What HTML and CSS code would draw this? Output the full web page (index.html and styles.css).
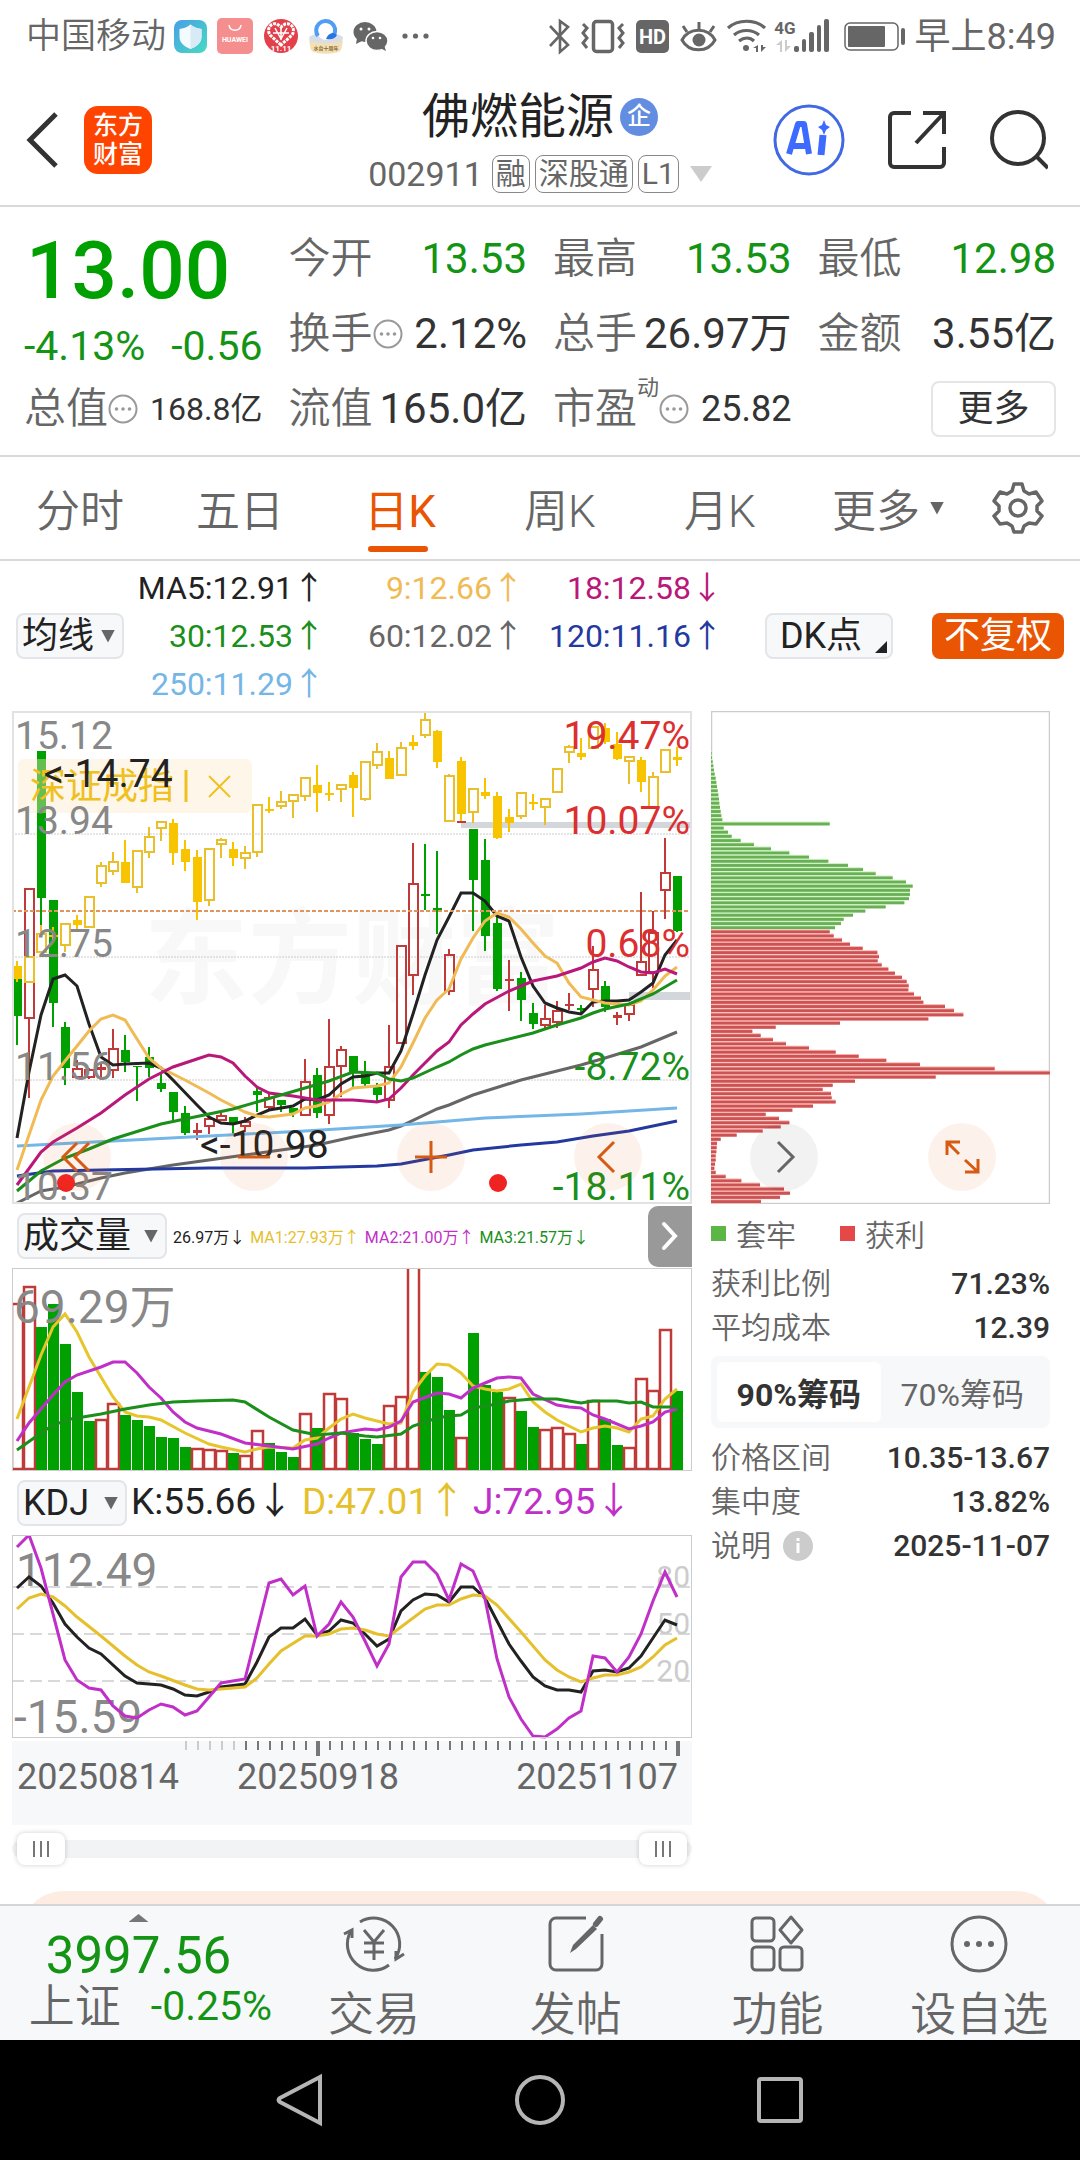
FILE: index.html
```html
<!doctype html>
<html lang="zh-CN">
<head>
<meta charset="utf-8">
<meta name="viewport" content="width=device-width, initial-scale=1">
<title>佛燃能源 002911</title>
<link rel="stylesheet" href="styles.css">
</head>
<body>
<div class="app">

    <!-- 状态栏 -->
    <div class="statusbar">
        <div class="status-side">
            <span class="carrier">中国移动</span>
            <svg class="status-left" viewBox="174 18 256 38">
                <defs>
                    <linearGradient id="shieldBg" x1="0" y1="0" x2="1" y2="1"><stop offset="0" stop-color="#4a9ee8"/><stop offset="1" stop-color="#45dcc0"/></linearGradient>
                </defs>
                <rect x="174" y="20" width="33" height="33" rx="8" fill="url(#shieldBg)"/>
                <path d="M190.500 24.500c4 3 7 4 11 4.500v8c0 6-5 9.500-11 12-6-2.500-11-6-11-12v-8c4-.5 7-1.500 11-4.500z" fill="#f3fbff"/>
                <path d="M190.500 24.500c4 3 7 4 11 4.500v8c0 6-5 9.500-11 12z" fill="#d8eaf5"/>
                <rect x="217" y="18" width="36" height="36" rx="5" fill="#f58e8e"/>
                <path d="M229 25c1 7 11 7 12 0" fill="none" stroke="#fff" stroke-width="1.500"/>
                <text x="235" y="42" class="icon-text" font-size="7" text-anchor="middle">HUAWEI</text>
                <circle cx="281" cy="36" r="17" fill="#e2404a"/>
                <path d="M281 45l-11-10c-4-6 1-13 7-11l4 3 4-3c6-2 11 5 7 11z" fill="none" stroke="#fff" stroke-width="3" stroke-dasharray="3 1"/>
                <path d="M275 28l6 11 6-11M273 33h16M281 28v12" fill="none" stroke="#fff" stroke-width="1.500"/>
                <text x="281" y="51" class="icon-text" font-size="8" text-anchor="middle">11.11</text>
                <path d="M309 37c8-6 25-6 34 0l-2 12c-2 4-28 4-30 0z" fill="#d9dee6"/>
                <circle cx="326" cy="31" r="9" fill="#fff"/>
                <path d="M318 36a9.500 9.500 0 1 1 16-1" fill="none" stroke="#4f9df5" stroke-width="4"/>
                <path d="M326 39c2-6 8-8 11-4-2 4-6 5-11 4z" fill="#2a76e0"/>
                <path d="M309 41c10 3 24 3 34 0l-2 9c-4 5-26 5-30 0z" fill="#f3e0b4"/>
                <text x="326" y="50" class="icon-text brown" font-size="5" text-anchor="middle">水台十周年</text>
                <ellipse cx="365" cy="32" rx="11.500" ry="10" fill="#666"/>
                <path d="M357 38l-1 6 6-3z" fill="#666"/>
                <ellipse cx="377" cy="41" rx="11" ry="9.500" fill="#666" stroke="#fff" stroke-width="1.500"/>
                <path d="M380 48l6 3-2-6z" fill="#666"/>
                <g fill="#fff"><circle cx="361" cy="29" r="1.500"/><circle cx="369" cy="29" r="1.500"/><circle cx="373" cy="38" r="1.300"/><circle cx="380" cy="38" r="1.300"/></g>
                <g fill="#666"><circle cx="405" cy="36" r="2.600"/><circle cx="415.500" cy="36" r="2.600"/><circle cx="426" cy="36" r="2.600"/></g>
            </svg>
        </div>
        <div class="status-side">
            <svg class="status-right" viewBox="548 18 358 38">
                <g fill="none" stroke="#666" stroke-width="2.600">
                    <path d="M549 26l18 19-8 7V21l8 6-18 19"/>
                    <rect x="592.500" y="21.500" width="19" height="30" rx="3" stroke-width="3.500"/>
                    <path d="M582 24l4 4-4 5 4 5-4 5 4 5M622 24l-4 4 4 5-4 5 4 5-4 5" stroke-width="3"/>
                    <path d="M681 40c7-13 26-13 33 0-7 13-26 13-33 0z" stroke-width="3"/>
                    <path d="M698 22v7M682 26l4 6M713 26l-4 6" stroke-width="3"/>
                    <path d="M727 28c10-9 27-9 37 0M733 35c7-6 18-6 25 0M738 41c5-4 11-4 15 0" stroke-width="3.200"/>
                </g>
                <rect x="635" y="20" width="33" height="33" rx="5" fill="#666"/>
                <text x="651.500" y="44" class="icon-text" font-size="20" text-anchor="middle">HD</text>
                <g fill="#666">
                    <circle cx="698" cy="40" r="6.500"/>
                    <circle cx="745" cy="48" r="3"/>
                    <path d="M757 45v7h-2v-4h-3zM760 45v7l5-5h-3v-2z"/>
                    <rect x="793" y="46" width="5" height="6" rx="2"/><rect x="801" y="39" width="4" height="13" rx="2"/><rect x="808" y="32" width="5" height="20" rx="2"/><rect x="816" y="25" width="4" height="27" rx="2"/><rect x="823" y="19" width="5" height="33" rx="2"/>
                </g>
                <path d="M781 40v12h-2v-7h-4zM784 40v12l6-6h-4v-6z" fill="#ccc"/>
                <text x="784" y="34" class="icon-text gray" font-size="17" text-anchor="middle">4G</text>
                <rect x="844" y="23" width="53" height="27" rx="5" fill="none" stroke="#666" stroke-width="1.500"/>
                <rect x="847" y="26" width="37" height="21" rx="1" fill="#666"/>
                <rect x="900" y="28" width="4" height="17" rx="2" fill="#666"/>
            </svg>
            <span>早上8:49</span>
        </div>
    </div>

    <!-- 标题栏 -->
    <header class="header">
        <div class="header-side">
            <button class="icon-btn" aria-label="返回"><svg width="34" height="58" viewBox="0 0 34 58"><path d="M30 3L4 29l26 26" fill="none" stroke="#333" stroke-width="5"/></svg></button>
            <a class="logo" href="#"><span>东方</span><span>财富</span></a>
        </div>
        <div class="stock">
            <h1>佛燃能源<span class="corp">企</span></h1>
            <div class="stock-sub">
                <span class="code">002911</span>
                <span class="tag">融</span><span class="tag">深股通</span><span class="tag">L1</span>
                <svg width="22" height="16" viewBox="0 0 22 16"><path d="M0 0h22L11 16z" fill="#ccc"/></svg>
            </div>
        </div>
        <div class="header-side actions">
            <button class="icon-btn" aria-label="AI">
                <svg width="74" height="74" viewBox="0 0 74 74">
                    <circle cx="37" cy="37" r="34" fill="none" stroke="#4169e1" stroke-width="3"/>
                    <path d="M17 51l9-30h6l5 30M20 43h15" fill="none" stroke="#3d6bff" stroke-width="6" stroke-linejoin="round"/>
                    <path d="M51 32l-2 20" stroke="#3d6bff" stroke-width="7"/>
                    <path d="M52 17l2 5 4 2-4 3-2 5-2-5-4-3 4-2z" fill="#3d6bff"/>
                </svg>
            </button>
            <button class="icon-btn" aria-label="分享">
                <svg width="60" height="60" viewBox="0 0 60 60" fill="none" stroke="#333" stroke-width="4"><path d="M24 3H7a4 4 0 0 0-4 4v46a4 4 0 0 0 4 4h46a4 4 0 0 0 4-4V37M36 3h21v21M57 3L29 33"/></svg>
            </button>
            <button class="icon-btn" aria-label="搜索">
                <svg width="60" height="60" viewBox="0 0 60 60" fill="none" stroke="#333" stroke-width="4"><circle cx="30" cy="28" r="26"/><path d="M48 46l12 12"/></svg>
            </button>
        </div>
    </header>

    <!-- 行情数据 -->
    <section class="quote">
        <div class="price">13.00</div>
        <div class="cell"><span>今开</span><b class="down">13.53</b></div>
        <div class="cell"><span>最高</span><b class="down">13.53</b></div>
        <div class="cell"><span>最低</span><b class="down">12.98</b></div>
        <div class="cell change"><b class="down">-4.13%</b><b class="down">-0.56</b></div>
        <div class="cell"><span>换手</span><svg class="more-dot" viewBox="0 0 30 30"><use href="#dots"/></svg><b>2.12%</b></div>
        <div class="cell"><span>总手</span><b>26.97万</b></div>
        <div class="cell"><span>金额</span><b>3.55亿</b></div>
        <div class="cell"><span>总值</span><svg class="more-dot" viewBox="0 0 30 30"><use href="#dots"/></svg><b class="small">168.8亿</b></div>
        <div class="cell"><span>流值</span><b>165.0亿</b></div>
        <div class="cell"><span>市盈</span><sup>动</sup><svg class="more-dot" viewBox="0 0 30 30"><use href="#dots"/></svg><b class="medium">25.82</b></div>
        <div class="cell end"><button class="more-btn">更多</button></div>
    </section>

    <!-- 周期切换 -->
    <nav class="tabs">
        <button>分时</button>
        <button>五日</button>
        <button class="on"><span>日K</span></button>
        <button>周K</button>
        <button>月K</button>
        <button class="more">更多<i class="tri"></i></button>
        <button class="gear" aria-label="设置">
            <svg width="52" height="52" viewBox="0 0 52 52" fill="none" stroke="#666" stroke-width="3.500" stroke-linejoin="round">
                <path d="M22 2h8l2 7 5 3 7-2 6 9-5 5v5l5 5-6 8-7-1-5 3-2 6h-8l-2-6-5-3-7 1-6-8 5-5v-5l-5-5 6-9 7 2 5-3z"/>
                <circle cx="26" cy="26" r="8"/>
            </svg>
        </button>
    </nav>

    <!-- 均线 -->
    <div class="ma-bar">
        <label class="pick"><select aria-label="均线"><option>均线</option></select><i class="tri"></i></label>
        <div class="ma-list">
            <span class="c-black">MA5:12.91<i>↑</i></span>
            <span class="c-gold">9:12.66<i>↑</i></span>
            <span class="c-rose">18:12.58<i>↓</i></span>
            <span class="c-green">30:12.53<i>↑</i></span>
            <span class="c-gray">60:12.02<i>↑</i></span>
            <span class="c-navy">120:11.16<i>↑</i></span>
            <span class="c-sky">250:11.29<i>↑</i></span>
        </div>
        <button class="dk-btn">DK点</button>
        <button class="fq-btn">不复权</button>
    </div>

    <main class="main">
        <div class="charts">
            <div class="chart-box">
                <svg class="chart" id="kline" viewBox="12 711 680 493"></svg>
                <div class="chart-tools">
                    <button aria-label="最左"><svg viewBox="0 0 68 68"><path d="M34 20L20 34l14 14M46 20L32 34l14 14"/></svg></button>
                    <button aria-label="缩小"><svg viewBox="0 0 68 68"><path d="M18 34h32"/></svg></button>
                    <button aria-label="放大"><svg viewBox="0 0 68 68"><path d="M18 34h32M34 18v32"/></svg></button>
                    <button aria-label="左移"><svg viewBox="0 0 68 68"><path d="M40 19L25 34l15 15"/></svg></button>
                </div>
            </div>

            <div class="ind-bar vol-bar">
                <label class="pick wide"><select aria-label="副图一"><option>成交量</option></select><i class="tri"></i></label>
                <div class="vol-list">
                    <span class="c-black">26.97万<i>↓</i></span>
                    <span class="c-yellow">MA1:27.93万<i>↑</i></span>
                    <span class="c-purple">MA2:21.00万<i>↑</i></span>
                    <span class="c-green">MA3:21.57万<i>↓</i></span>
                </div>
                <button class="expand" aria-label="展开"><svg width="18" height="30" viewBox="0 0 18 30"><path d="M3 3l11 12L3 27" fill="none" stroke="#fff" stroke-width="4" stroke-linecap="round"/></svg></button>
            </div>
            <svg class="chart" id="volume" viewBox="12 1268 680 203"></svg>

            <div class="ind-bar kdj-bar">
                <label class="pick mid"><select aria-label="副图二"><option>KDJ</option></select><i class="tri"></i></label>
                <div class="kdj-list">
                    <span class="c-black">K:55.66<i>↓</i></span>
                    <span class="c-yellow">D:47.01<i>↑</i></span>
                    <span class="c-purple">J:72.95<i>↓</i></span>
                </div>
            </div>
            <svg class="chart" id="kdj" viewBox="12 1534 680 204"></svg>
            <svg class="chart ruler" id="ruler" viewBox="12 1738 680 86"></svg>

            <div class="range">
                <input type="range" min="0" max="100" value="0" aria-label="起始">
                <input type="range" min="0" max="100" value="100" aria-label="结束">
            </div>
        </div>

        <aside class="chips">
            <div class="chart-box">
                <svg class="chart" id="chips" viewBox="711 711 339 493"></svg>
                <div class="chart-tools right">
                    <button class="plain" aria-label="右移"><svg viewBox="0 0 68 68"><path d="M28 19l15 15-15 15"/></svg></button>
                    <button aria-label="全屏"><svg viewBox="0 0 68 68"><path d="M19 32V19h13M19 19l12 12M37 49h13V36M50 49L37 37"/></svg></button>
                </div>
            </div>
            <div class="legend"><span><i class="sq green"></i>套牢</span><span><i class="sq red"></i>获利</span></div>
            <dl>
                <div><dt>获利比例</dt><dd>71.23%</dd></div>
                <div><dt>平均成本</dt><dd>12.39</dd></div>
            </dl>
            <div class="seg"><button class="on">90%筹码</button><button>70%筹码</button></div>
            <dl>
                <div><dt>价格区间</dt><dd>10.35-13.67</dd></div>
                <div><dt>集中度</dt><dd>13.82%</dd></div>
                <div><dt>说明<svg width="30" height="30" viewBox="0 0 30 30"><circle cx="15" cy="15" r="15" fill="#ccc"/><path d="M15 12v10M15 7v3" stroke="#fff" stroke-width="3"/></svg></dt><dd>2025-11-07</dd></div>
            </dl>
        </aside>

        <div class="panel"></div>
    </main>

    <!-- 底部栏 -->
    <footer class="bottom">
        <a class="index" href="#">
            <i class="up"></i>
            <span class="index-num">3997.56</span>
            <span class="index-row"><span>上证</span><b>-0.25%</b></span>
        </a>
        <button>
            <svg viewBox="0 0 66 60" fill="none" stroke="#666" stroke-width="3"><path d="M19 8a26 26 0 0 1 35 37M48 51A26 26 0 0 1 10 17"/><path d="M3 20l8-4v8M63 40l-8 5v-8"/><path d="M23 16l10 12 10-12M33 28v18M23 29h20M23 38h20"/></svg>
            <span>交易</span>
        </button>
        <button>
            <svg viewBox="0 0 66 60" fill="none" stroke="#666" stroke-width="3"><path d="M43 4H13a6 6 0 0 0-6 6v40a6 6 0 0 0 6 6h40a6 6 0 0 0 6-6V20"/><path d="M27 39l3-8L50 11l4 4-21 20z" fill="#666" stroke="none"/><path d="M53 10l4-5" stroke-width="6" stroke-linecap="round"/></svg>
            <span>发帖</span>
        </button>
        <button>
            <svg viewBox="0 0 66 60" fill="none" stroke="#666" stroke-width="3"><rect x="8" y="4" width="22" height="23" rx="4"/><rect x="8" y="33" width="22" height="23" rx="4"/><rect x="36" y="33" width="22" height="23" rx="4"/><path d="M47 3l11 13-11 13-11-13z" stroke-linejoin="round"/></svg>
            <span>功能</span>
        </button>
        <button>
            <svg viewBox="0 0 66 60" fill="none" stroke="#666" stroke-width="3"><circle cx="33" cy="30" r="27"/><g fill="#666" stroke="none"><circle cx="21" cy="30" r="3"/><circle cx="33" cy="30" r="3"/><circle cx="45" cy="30" r="3"/></g></svg>
            <span>设自选</span>
        </button>
    </footer>

    <div class="sysnav">
        <button aria-label="后退"><svg viewBox="0 0 54 54"><path d="M47 4v46L7 29q-3-2 0-4z"/></svg></button>
        <button aria-label="主页"><svg viewBox="0 0 54 54"><circle cx="27" cy="27" r="23"/></svg></button>
        <button aria-label="多任务"><svg viewBox="0 0 54 54"><rect x="6" y="6" width="42" height="42" rx="2"/></svg></button>
    </div>
</div>

<svg class="defs">
    <symbol id="dots" viewBox="0 0 30 30"><circle cx="15" cy="15" r="13.500" fill="none" stroke="#999" stroke-width="2"/><g fill="#999"><circle cx="8.500" cy="15" r="1.800"/><circle cx="15" cy="15" r="1.800"/><circle cx="21.500" cy="15" r="1.800"/></g></symbol>
</svg>
<script src="script.js"></script>
</body>
</html>
```

FILE: styles.css
```css
* {
    box-sizing: border-box;
}

body {
    margin: 0;
    background: #fff;
    color: #333;
    font-family: Roboto, "Noto Sans CJK SC", sans-serif;
}

button, select {
    padding: 0;
    border: 0;
    background: none;
    color: inherit;
    font: inherit;
    cursor: pointer;
}

svg {
    display: block;
}

i {
    font-style: normal;
}

a {
    color: inherit;
    text-decoration: none;
}

.defs {
    position: absolute;
    width: 0;
    height: 0;
}

.app {
    display: flex;
    flex-direction: column;
    height: 100vh;
    overflow: hidden;
}

/* 状态栏 */
.statusbar {
    display: flex;
    justify-content: space-between;
    align-items: center;
    height: 74px;
    padding: 0 24px 0 26px;
    color: #666;
    font-size: 36px;
    line-height: 40px;
}

.status-side {
    display: flex;
    align-items: center;
    gap: 8px;
}

.carrier {
    font-size: 35px;
    font-weight: 350;
}

.status-left {
    width: 256px;
    height: 38px;
}

.status-right {
    width: 358px;
    height: 38px;
}

.icon-text {
    fill: #fff;
    font-weight: 700;
}

.icon-text.gray {
    fill: #666;
}

.icon-text.brown {
    fill: #8a6a3a;
}

/* 标题栏 */
.header {
    display: grid;
    grid-template-columns: 1fr auto 1fr;
    height: 133px;
    padding: 0 26px;
    border-bottom: 2px solid #d9d9d9;
}

.header-side {
    display: flex;
    align-items: center;
    gap: 24px;
}

.actions {
    justify-content: flex-end;
    gap: 41px;
    padding-right: 6px;
}

.logo {
    display: flex;
    flex-direction: column;
    align-items: center;
    justify-content: center;
    width: 68px;
    height: 68px;
    border-radius: 14px;
    background: #ff4400;
    color: #fff;
    font-size: 25px;
    font-weight: 500;
    line-height: 29px;
}

.stock {
    display: flex;
    flex-direction: column;
    align-items: center;
    padding-top: 15px;
}

.stock h1 {
    display: flex;
    align-items: center;
    gap: 6px;
    margin: 0;
    color: #222;
    font-size: 48px;
    font-weight: 400;
    line-height: 56px;
}

.corp {
    width: 38px;
    height: 38px;
    border-radius: 50%;
    background: #628de0;
    color: #fff;
    font-size: 24px;
    font-weight: 500;
    line-height: 37px;
    text-align: center;
}

.stock-sub {
    display: flex;
    align-items: center;
    gap: 5px;
    height: 58px;
    color: #666;
    font-size: 34px;
}

.stock-sub svg {
    margin-left: 6px;
}

.code {
    margin-right: 4px;
}

.tag {
    height: 38px;
    padding: 0 3px;
    border: 1px solid #888;
    border-radius: 8px;
    font-size: 30px;
    line-height: 36px;
}

/* 行情数据 */
.quote {
    display: grid;
    grid-template-columns: repeat(4, 1fr);
    grid-template-rows: repeat(3, 75px);
    column-gap: 26px;
    height: 250px;
    padding: 14px 24px 0;
    border-bottom: 2px solid #d9d9d9;
    color: #666;
    font-size: 42px;
}

.price {
    padding-left: 2px;
    color: #00a000;
    font-size: 80px;
    font-weight: 500;
    line-height: 100px;
}

.cell {
    display: flex;
    align-items: center;
    justify-content: space-between;
    line-height: 50px;
    white-space: nowrap;
}

.cell span {
    font-weight: 350;
}

.cell.change {
    align-items: flex-end;
    font-size: 41px;
}

.cell.end {
    justify-content: flex-end;
}

.cell b {
    color: #333;
    font-weight: 400;
}

.cell b.down {
    color: #149414;
}

.cell b.small {
    font-size: 32px;
}

.cell b.medium {
    font-size: 36px;
}

.more-dot {
    flex: none;
    width: 30px;
    height: 30px;
    margin-right: auto;
}

.cell sup {
    align-self: flex-start;
    font-size: 22px;
    line-height: 34px;
}

.more-btn {
    width: 125px;
    height: 56px;
    border: 2px solid #e5e5e5;
    border-radius: 8px;
    color: #333;
    font-size: 36px;
    line-height: 40px;
}

/* 周期切换 */
.tabs {
    display: flex;
    align-items: center;
    height: 104px;
    padding-right: 20px;
    border-bottom: 2px solid #d9d9d9;
    color: #666;
    font-size: 44px;
    font-weight: 350;
}

.tabs button {
    display: flex;
    flex: 160;
    align-items: center;
    justify-content: center;
    gap: 10px;
    height: 96px;
}

.tabs .more {
    flex: 176;
}

.tabs .gear {
    flex: 84;
}

.tabs .on span {
    position: relative;
    color: #ea5504;
    font-weight: 400;
}

.tabs .on span::after {
    content: "";
    position: absolute;
    bottom: -12px;
    left: 4px;
    right: 8px;
    height: 6px;
    border-radius: 3px;
    background: #ea5504;
}

.tri {
    width: 14px;
    height: 13px;
    background: #666;
    clip-path: polygon(0 0, 100% 0, 50% 100%);
}

/* 均线栏 */
.ma-bar {
    display: flex;
    align-items: center;
    height: 150px;
    padding: 0 16px;
}

.ma-list {
    display: grid;
    grid-template-columns: repeat(3, 199px);
    flex: 1;
    padding-left: 2px;
    font-size: 32px;
    line-height: 48px;
    text-align: right;
}

.pick {
    position: relative;
    display: flex;
    align-items: center;
    width: 108px;
    height: 46px;
    border: 2px solid #e3e5e9;
    border-radius: 8px;
    background: #f7f8fa;
    color: #222;
    font-size: 36px;
}

.pick.wide {
    width: 150px;
}

.pick.mid {
    width: 110px;
}

.pick select {
    width: 100%;
    height: 42px;
    padding-left: 4px;
    appearance: none;
    outline: 0;
}

.pick .tri {
    position: absolute;
    right: 7px;
    pointer-events: none;
}

.dk-btn,
.fq-btn {
    height: 46px;
    border-radius: 8px;
    font-size: 36px;
    line-height: 42px;
}

.dk-btn {
    position: relative;
    width: 128px;
    margin-right: 39px;
    padding-right: 16px;
    border: 2px solid #e3e5e9;
    background: #f7f8fa;
    color: #222;
}

.dk-btn::after {
    content: "";
    position: absolute;
    right: 4px;
    bottom: 4px;
    width: 12px;
    height: 12px;
    background: #222;
    clip-path: polygon(100% 0, 100% 100%, 0 100%);
}

.fq-btn {
    width: 132px;
    background: #ea5504;
    color: #fff;
}

.c-black { color: #222; }
.c-gold { color: #f0bb55; }
.c-rose { color: #b9187a; }
.c-green { color: #1a8f1a; }
.c-gray { color: #666; }
.c-navy { color: #24399f; }
.c-sky { color: #74b6e6; }
.c-yellow { color: #e6c02c; }
.c-purple { color: #c030c8; }

/* 图表区 */
.main {
    display: grid;
    grid-template-columns: 680fr 339fr;
    grid-template-rows: auto 60px;
    column-gap: 19px;
    flex: 1;
    min-height: 0;
    padding: 0 30px 0 12px;
    overflow: hidden;
}

.chart {
    width: 100%;
    overflow: hidden;
}

.chart-box {
    position: relative;
}

.chart-tools {
    position: absolute;
    left: 31px;
    right: 50px;
    bottom: 13px;
    display: flex;
    justify-content: space-between;
}

.chart-tools.right {
    left: 39px;
    right: 54px;
}

.chart-tools button {
    width: 68px;
    height: 68px;
    border-radius: 50%;
    background: rgba(234, 85, 4, .08);
}

.chart-tools path {
    fill: none;
    stroke: #d65a14;
    stroke-width: 3;
}

.chart-tools .plain {
    background: rgba(0, 0, 0, .05);
}

.chart-tools .plain path {
    stroke: #666;
}

.chart text {
    font-size: 40px;
}

.ind-bar {
    display: flex;
    align-items: center;
    height: 64px;
    padding-left: 5px;
    white-space: nowrap;
}

.vol-list {
    display: flex;
    gap: 5px;
    flex: 1;
    padding-left: 6px;
    font-size: 16px;
}

.kdj-list {
    display: grid;
    grid-template-columns: repeat(3, 171px);
    padding-left: 4px;
    font-size: 37px;
    line-height: 40px;
}

.kdj-list span {
    height: 42px;
}

.expand {
    display: flex;
    align-items: center;
    justify-content: center;
    width: 44px;
    height: 61px;
    border-radius: 10px 0 0 10px;
    background: #999;
}

.ruler {
    background: #f7f8fa;
}

.range {
    position: relative;
    height: 48px;
    padding: 15px 0;
}

.range::before {
    content: "";
    display: block;
    height: 18px;
    border-radius: 9px;
    background: #f2f3f5;
}

.range input {
    position: absolute;
    top: 8px;
    left: 5px;
    width: calc(100% - 10px);
    height: 32px;
    margin: 0;
    background: none;
    appearance: none;
    pointer-events: none;
}

.range input::-webkit-slider-thumb {
    width: 48px;
    height: 32px;
    border: 0;
    border-radius: 8px;
    background:
        linear-gradient(#777, #777) 16px 8px / 2px 16px no-repeat,
        linear-gradient(#777, #777) 23px 8px / 2px 16px no-repeat,
        linear-gradient(#777, #777) 30px 8px / 2px 16px no-repeat,
        #fff;
    box-shadow: 0 0 5px rgba(0, 0, 0, .2);
    appearance: none;
    pointer-events: auto;
}

/* 筹码 */
.legend {
    display: flex;
    gap: 44px;
    height: 58px;
    align-items: center;
    color: #666;
    font-size: 30px;
    font-weight: 350;
}

.legend span {
    display: flex;
    align-items: center;
    gap: 10px;
}

.sq {
    width: 15px;
    height: 15px;
    background: #5cb646;
}

.sq.red {
    background: #e54848;
}

.chips dl {
    margin: 0;
    font-size: 30px;
    line-height: 44px;
}

.chips dl div {
    display: flex;
    justify-content: space-between;
}

.chips dt {
    display: flex;
    align-items: center;
    gap: 12px;
    color: #666;
    font-weight: 350;
}

.chips dd {
    margin: 0;
    font-size: 30px;
    font-weight: 500;
}

.seg {
    display: flex;
    height: 72px;
    margin: 6px 0 8px;
    padding: 6px;
    border-radius: 8px;
    background: #f7f8fa;
    color: #666;
    font-size: 32px;
}

.seg button {
    flex: 1;
    border-radius: 6px;
}

.seg .on {
    background: #fff;
    color: #333;
    font-weight: 700;
}

.panel {
    grid-column: 1 / 3;
    height: 60px;
    margin: 18px -10px 0 8px;
    border-radius: 44px 44px 0 0;
    background: #fdece2;
}

/* 底部栏 */
.bottom {
    display: flex;
    height: 136px;
    border-top: 2px solid #d5d5d5;
    background: #f7f8fa;
    color: #666;
}

.index {
    display: flex;
    flex-direction: column;
    align-items: center;
    width: 273px;
    padding: 8px 0 0 4px;
    white-space: nowrap;
}

.up {
    width: 20px;
    height: 8px;
    background: #777;
    clip-path: polygon(50% 0, 100% 100%, 0 100%);
}

.index-num {
    color: #149414;
    font-size: 51px;
    line-height: 68px;
}

.index-row {
    display: flex;
    align-items: center;
    gap: 30px;
    padding-left: 24px;
    font-size: 46px;
    font-weight: 350;
    line-height: 32px;
}

.index-row b {
    color: #149414;
    font-size: 41px;
    font-weight: 400;
}

.bottom button {
    display: flex;
    flex: 1;
    flex-direction: column;
    align-items: center;
    gap: 14px;
    padding-top: 8px;
    font-size: 46px;
    font-weight: 350;
    line-height: 52px;
    white-space: nowrap;
}

.bottom button svg {
    flex: none;
    width: 66px;
    height: 60px;
}

.sysnav {
    display: flex;
    justify-content: center;
    gap: 186px;
    height: 120px;
    background: #000;
}

.sysnav svg {
    width: 54px;
    height: 54px;
    fill: none;
    stroke: #b5b5b5;
    stroke-width: 4;
}
```

FILE: script.js
```js
// 每根K线间距12，第一根中心在17
var X0 = 17, STEP = 12;
var RED = '#c03a3a', GREEN = '#00a000', YEL = '#e9c02c', FILL = '#f8c400';

// 个股: 类型(r阳 g阴), 实体上, 实体下, 最高, 最低
var stock = [
    ['g',978,1016,978,1045],['r',889,1018,889,1098],['g',751,898,751,925],['g',900,1003,900,1027],['g',1027,1068,1022,1085],
    ['r',1069,1077,1060,1077],['r',1070,1077,1068,1079],['r',1067,1070,1063,1080],['r',1049,1070,1029,1078],['g',1050,1062,1035,1072],
    ['g',1066,1067,1066,1101],['g',1057,1068,1047,1077],['g',1083,1089,1073,1092],['g',1092,1112,1092,1121],['g',1113,1133,1106,1135],
    ['r',1130,1133,1123,1140],['r',1119,1126,1117,1134],['r',1116,1120,1113,1120],['g',1117,1124,1117,1134],['r',1122,1126,1117,1132],
    ['g',1091,1095,1087,1112],['r',1098,1107,1094,1109],['g',1100,1105,1100,1112],['g',1108,1113,1108,1117],['r',1082,1115,1059,1115],
    ['g',1075,1113,1068,1118],['r',1067,1115,1019,1124],['r',1050,1066,1046,1097],['g',1056,1073,1056,1088],['g',1073,1084,1061,1087],
    ['g',1087,1095,1083,1103],['r',1067,1100,1025,1108],['r',946,1043,946,1043],['r',884,975,843,995],['g',894,896,844,910],
    ['g',908,911,851,934],['r',955,991,949,995],['r',821,823,822,823],['g',829,880,829,931],['g',860,936,839,951],
    ['g',923,989,917,991],['r',979,981,960,1011],['g',978,1000,972,1021],['g',1013,1024,1003,1029],['r',1019,1025,1005,1030],
    ['r',1011,1022,1001,1028],['r',1004,1006,993,1010],['g',1008,1010,1005,1015],['r',970,989,946,1007],['g',986,1007,981,1012],
    ['r',1015,1018,1012,1025],['r',1005,1014,1005,1021],['r',962,975,892,975],['r',933,972,911,988],['r',873,890,838,919],['g',876,931,876,932]
];

// 深证成指: h空心 f实心
var index = [
    ['f',966,979,961,982],['h',957,982,957,982],['h',934,952,925,952],['f',935,937,927,942],['h',924,945,924,952],
    ['f',920,925,915,930],['h',897,927,897,927],['h',866,883,862,887],['h',862,871,852,875],['f',862,883,840,883],
    ['h',851,887,851,893],['h',837,852,827,858],['h',822,828,822,841],['f',823,853,819,865],['f',849,862,840,871],
    ['f',857,902,850,920],['h',849,900,849,906],['h',840,844,838,858],['f',849,858,842,866],['h',853,858,846,869],
    ['h',805,852,805,857],['f',809,811,797,813],['h',802,806,791,809],['h',795,801,795,818],['h',778,796,778,801],
    ['f',785,793,765,812],['f',793,795,782,801],['h',785,789,785,802],['f',775,788,772,817],['h',762,799,762,801],
    ['h',752,765,743,769],['f',758,779,751,779],['h',748,775,742,775],['f',742,746,735,750],['h',720,735,711,738],
    ['f',731,762,730,768],['h',776,821,774,821],['f',761,814,757,821],['h',789,812,789,823],['f',792,796,778,799],
    ['f',796,838,792,839],['f',817,823,809,832],['h',793,816,792,819],['f',802,804,794,810],['h',799,807,798,825],
    ['h',769,792,769,792],['h',747,752,745,763],['f',753,757,738,760],['h',727,748,727,748],['f',728,742,723,744],
    ['f',744,759,732,760],['h',757,761,756,784],['f',760,782,757,792],['h',777,807,772,807],['h',750,772,750,772],['f',757,760,747,766]
];

var maLines = {
    '#666666': '17,1203 41,1191 65,1187 101,1178 125,1173 149,1169 173,1165 245,1155 281,1150 317,1145 353,1137 389,1130 401,1126 437,1109 449,1105 473,1095 521,1080 581,1065 605,1058 641,1047 677,1032',
    '#74b6e6': '17,1146 113,1141 209,1136 305,1131 353,1128 401,1125 449,1121 485,1118 581,1114 677,1108',
    '#24399f': '17,1176 53,1171 101,1170 209,1168 305,1168 377,1166 401,1164 449,1155 473,1150 521,1145 557,1142 593,1136 629,1131 677,1121',
    '#222222': '17,1138 29,1072 41,1015 53,979 65,975 77,986 89,1024 101,1057 113,1065 125,1064 149,1063 161,1068 173,1080 197,1105 209,1117 221,1123 233,1124 245,1121 257,1115 269,1110 293,1106 305,1099 317,1100 329,1095 341,1084 353,1077 365,1076 377,1073 389,1073 401,1051 413,1014 425,975 437,940 449,917 461,893 473,893 485,901 497,916 509,921 521,957 533,986 545,1003 557,1008 569,1012 581,1014 593,1002 605,1001 617,1001 629,1000 641,992 653,983 665,955 677,940',
    '#f0bb55': '17,1170 41,1100 53,1076 65,1061 89,1031 101,1019 113,1015 125,1020 149,1058 161,1068 185,1080 209,1093 221,1100 245,1112 257,1116 269,1117 293,1114 305,1108 317,1106 329,1102 341,1094 353,1088 377,1086 389,1083 401,1067 413,1043 425,1018 437,1000 449,989 461,959 473,938 485,921 497,913 509,917 521,929 533,943 545,956 557,963 569,983 581,997 605,1003 629,1005 641,1001 653,990 665,976 677,967',
    '#b9187a': '17,1185 41,1152 53,1142 77,1128 101,1113 125,1095 149,1079 173,1067 197,1059 209,1055 221,1057 233,1063 245,1076 257,1087 269,1093 293,1096 317,1100 353,1100 377,1102 389,1099 401,1088 413,1075 437,1051 449,1042 461,1025 473,1014 485,1004 509,991 533,981 557,976 581,968 593,962 605,958 617,961 629,967 641,972 653,973 665,969 677,974',
    '#1a8f1a': '17,1191 41,1171 65,1158 89,1149 113,1139 161,1124 185,1119 233,1109 257,1102 281,1095 305,1088 329,1081 353,1072 377,1073 389,1079 401,1081 413,1078 437,1067 449,1062 461,1055 473,1049 485,1045 533,1033 557,1025 581,1018 593,1013 605,1009 629,1004 653,994 677,980'
};

// 筹码分布，最大1017
var chips = [2,3,5,7,9,11,14,16,18,20,22,24,25,27,29,31,34,356,38,51,62,89,129,180,235,294,352,411,456,494,545,585,605,597,597,594,580,524,463,426,398,390,372,
    356,368,393,417,455,499,504,500,512,532,552,573,587,593,592,609,630,637,702,729,757,652,387,194,124,149,186,225,294,374,443,526,627,851,1017,674,432,365,335,360,362,374,306,244,164,
    204,235,209,155,77,29,18,17,16,14,14,12,10,14,44,91,147,219,237,207,150];

// 成交量柱顶
var volTop = [1304,1287,1327,1304,1344,1392,1421,1420,1404,1415,1420,1426,1437,1438,1447,1449,1450,1451,1453,1456,1431,1443,1452,1457,1414,1428,1394,1399,
    1433,1439,1444,1406,1397,1262,1372,1377,1410,1438,1333,1385,1392,1398,1411,1427,1430,1428,1434,1444,1401,1419,1445,1448,1379,1391,1330,1391];
var volType = 'rrggggg' + 'rr' + 'gggggg' + 'rrr' + 'g' + 'rr' + 'ggg' + 'rgrr' + 'ggg' + 'rrr' + 'ggg' + 'r' + 'ggg' + 'r' + 'gg' + 'rrr' + 'g' + 'r' + 'gg' + 'rrrr' + 'g';

var volLines = {
    '#e6c62c': '17,1419 29,1387 41,1355 53,1327 65,1314 77,1332 89,1357 101,1377 113,1397 125,1412 137,1416 149,1417 161,1420 185,1433 209,1444 221,1447 245,1452 257,1449 269,1447 293,1448 305,1440 317,1438 329,1428 341,1419 353,1414 365,1418 389,1424 401,1423 413,1392 425,1376 437,1364 449,1365 461,1373 473,1386 485,1389 497,1391 509,1389 521,1384 533,1402 545,1412 557,1420 581,1432 593,1428 605,1426 617,1428 629,1432 641,1419 653,1416 665,1399 677,1389',
    '#c030c8': '17,1441 29,1423 53,1395 65,1382 77,1375 101,1367 113,1362 125,1362 137,1373 149,1387 161,1398 173,1412 185,1422 197,1428 221,1434 245,1443 269,1446 293,1449 317,1444 329,1438 341,1433 365,1429 377,1430 389,1427 401,1421 413,1402 437,1393 449,1394 461,1398 473,1388 485,1383 497,1378 509,1377 521,1378 533,1394 557,1405 569,1407 581,1408 593,1415 605,1419 629,1429 641,1426 653,1422 665,1412 677,1409',
    '#1a8f1a': '17,1450 41,1433 53,1425 71,1419 101,1414 125,1409 149,1405 173,1402 197,1401 233,1400 245,1402 269,1417 293,1430 317,1435 341,1433 365,1436 377,1437 401,1434 413,1426 437,1418 449,1416 461,1415 473,1408 497,1404 509,1401 533,1399 557,1399 581,1403 593,1401 617,1401 629,1403 641,1402 653,1407 665,1407 677,1407'
};

var kdjLines = {
    '#222222': '17,1587 29,1576 41,1585 53,1602 65,1623 77,1636 89,1647 101,1653 125,1675 137,1682 161,1684 173,1688 185,1694 197,1695 209,1691 221,1686 245,1683 257,1661 269,1636 281,1627 293,1627 305,1618 317,1634 329,1630 341,1619 353,1622 365,1633 377,1645 389,1638 401,1610 413,1599 425,1593 437,1594 449,1601 461,1586 473,1586 485,1597 497,1620 509,1643 521,1660 533,1676 545,1685 557,1689 569,1689 581,1691 593,1670 605,1669 617,1671 629,1667 641,1655 653,1637 665,1619 677,1624',
    '#e6c02c': '17,1608 29,1597 41,1593 53,1596 65,1605 77,1616 101,1635 125,1655 137,1664 149,1671 161,1675 185,1684 197,1688 209,1689 245,1686 257,1677 269,1663 281,1650 305,1635 317,1635 329,1633 341,1628 353,1627 365,1629 377,1633 389,1635 401,1626 425,1608 437,1604 449,1604 461,1598 473,1594 485,1595 497,1604 521,1631 545,1659 557,1669 569,1676 581,1681 593,1677 605,1674 617,1674 629,1671 641,1666 653,1656 665,1644 677,1637',
    '#c030c8': '17,1546 29,1534 41,1567 53,1613 65,1659 77,1679 89,1687 101,1689 113,1705 125,1715 137,1717 149,1709 161,1703 173,1706 185,1714 197,1710 209,1696 221,1682 245,1678 257,1630 269,1582 281,1578 293,1594 305,1585 317,1635 329,1623 341,1601 353,1616 365,1640 377,1665 389,1643 401,1576 413,1561 425,1561 437,1573 449,1599 461,1563 473,1570 485,1598 497,1658 509,1696 521,1718 533,1735 545,1736 557,1728 569,1717 581,1710 593,1655 605,1657 617,1671 629,1656 641,1633 653,1600 665,1571 677,1596'
};

function rect(x, y, w, h, fill, stroke, sw) {
    return '<rect x="' + x + '" y="' + y + '" width="' + w + '" height="' + h + '" fill="' + fill + '"' +
        (stroke ? ' stroke="' + stroke + '" stroke-width="' + (sw || 2) + '"' : '') + '/>';
}

function line(x1, y1, x2, y2, color, w, dash) {
    return '<path d="M' + x1 + ' ' + y1 + 'L' + x2 + ' ' + y2 + '" stroke="' + color + '" stroke-width="' + w + '"' +
        (dash ? ' stroke-dasharray="' + dash + '"' : '') + '/>';
}

function text(x, y, str, color, size, anchor) {
    return '<text x="' + x + '" y="' + y + '" fill="' + color + '" style="font-size:' + size + 'px"' +
        (anchor ? ' text-anchor="' + anchor + '"' : '') + '>' + str + '</text>';
}

function polylines(set, w) {
    var s = '';
    for (var color in set) {
        s += '<polyline points="' + set[color] + '" fill="none" stroke="' + color + '" stroke-width="' + w + '"/>';
    }
    return s;
}

function candles(list, hollow, stroke, fill) {
    return list.map(function (c, i) {
        var x = X0 + STEP * i, open = c[0] == hollow;
        var color = open ? stroke : fill;
        var s = '';
        if (c[3] < c[1]) s += line(x, c[3], x, c[1], color, 2);
        if (c[4] > c[2]) s += line(x, c[2], x, c[4], color, 2);
        if (open && c[2] - c[1] > 3) return s + rect(x - 4, c[1], 9, c[2] - c[1], 'none', color);
        return s + rect(x - 4, c[1], 9, c[2] - c[1], color);
    }).join('');
}

// K线图
(function () {
    var s = '';
    s += '<text x="144" y="996" fill="#f8f8f8" font-weight="700" style="font-size:104px">东方财富</text>';
    [834, 957, 1080].forEach(function (y) { s += line(12, y, 692, y, '#ccc', 1, '2 1'); });
    s += rect(461, 822, 231, 6, '#d3d6db') + rect(629, 992, 63, 8, '#d3d6db');
    s += candles(stock, 'r', RED, GREEN);
    s += polylines(maLines, 3);
    s += line(12, 911, 692, 911, '#e0945f', 2, '4 2');
    s += '<rect x="18" y="759" width="234" height="54" rx="6" fill="#fdebc8" fill-opacity=".4"/>';
    s += text(30, 799, '深证成指', '#f0c020', 36);
    s += line(186, 770, 186, 802, '#f0c020', 3) + line(209, 776, 230, 797, '#f0c020', 2) + line(230, 776, 209, 797, '#f0c020', 2);
    s += candles(index, 'h', YEL, FILL);
    [['15.12', 749], ['13.94', 834], ['12.75', 957], ['11.56', 1080], ['10.37', 1200]].forEach(function (t) {
        s += text(15, t[1], t[0], '#888', 39);
    });
    [['19.47%', 749, '#dc2f2f'], ['10.07%', 834, '#dc2f2f'], ['0.68%', 957, '#dc2f2f'], ['-8.72%', 1080, '#1a8f1a'], ['-18.11%', 1200, '#1a8f1a']].forEach(function (t) {
        s += text(690, t[1], t[0], t[2], 39, 'end');
    });
    s += text(44, 787, '&lt;-14.74', '#222', 39) + text(200, 1158, '&lt;-10.98', '#222', 39);
    s += '<circle cx="66" cy="1183" r="9" fill="#f02323"/><circle cx="498" cy="1183" r="9" fill="#f02323"/>';
    s += rect(13, 712, 678, 491, 'none', '#e2e2e2');
    document.getElementById('kline').innerHTML = s;
})();

// 筹码图
(function () {
    var s = rect(711.5, 711.5, 338, 492, 'none', '#ccc', 1.5);
    chips.forEach(function (v, i) {
        var y = 752 + i * 4.15, w = v / 3, up = i < 43;
        s += rect(711, y - 1, w, 4.15, up ? '#c9f3bb' : '#fbb5b0');
        s += rect(711, y, w, 2.8, up ? '#6aae57' : '#cc5353');
    });
    document.getElementById('chips').innerHTML = s;
})();

// 成交量
(function () {
    var s = '';
    volTop.forEach(function (y, i) {
        var x = X0 + STEP * i;
        if (volType[i] == 'r') s += rect(x - 5, y, 11, 1469 - y, 'none', RED, 2.5);
        else s += rect(x - 5, y, 11, 1470 - y, GREEN);
    });
    s += polylines(volLines, 3);
    s += text(14, 1323, '69.29万', '#888', 46);
    s += rect(12.5, 1268.5, 679, 202, 'none', '#ccc', 1);
    document.getElementById('volume').innerHTML = s;
})();

// KDJ
(function () {
    var s = '';
    [[1586, '80'], [1633, '50'], [1680, '20']].forEach(function (t) {
        s += line(12, t[0], 692, t[0], '#d9d9d9', 2, '12 6');
        s += text(690, t[0], t[1], '#ccc', 30, 'end');
    });
    s += text(16, 1585, '112.49', '#888', 46) + text(14, 1732, '-15.59', '#888', 46);
    s += polylines(kdjLines, 3);
    s += rect(12.5, 1534.5, 679, 202, 'none', '#ccc', 1);
    document.getElementById('kdj').innerHTML = s;
})();

// 日期刻度
(function () {
    var s = rect(12, 1738, 680, 2, '#fff');
    for (var i = 14; i < 56; i++) {
        var big = i == 25 || i == 55;
        s += line(X0 + STEP * i + 1, 1740, X0 + STEP * i + 1, big ? 1755 : 1749, i < 19 ? '#ccc' : '#777', big ? 4 : 2);
    }
    s += text(17, 1788, '20250814', '#666', 36) + text(318, 1788, '20250918', '#666', 36, 'middle') + text(678, 1788, '20251107', '#666', 36, 'end');
    document.getElementById('ruler').innerHTML = s;
})();
```
